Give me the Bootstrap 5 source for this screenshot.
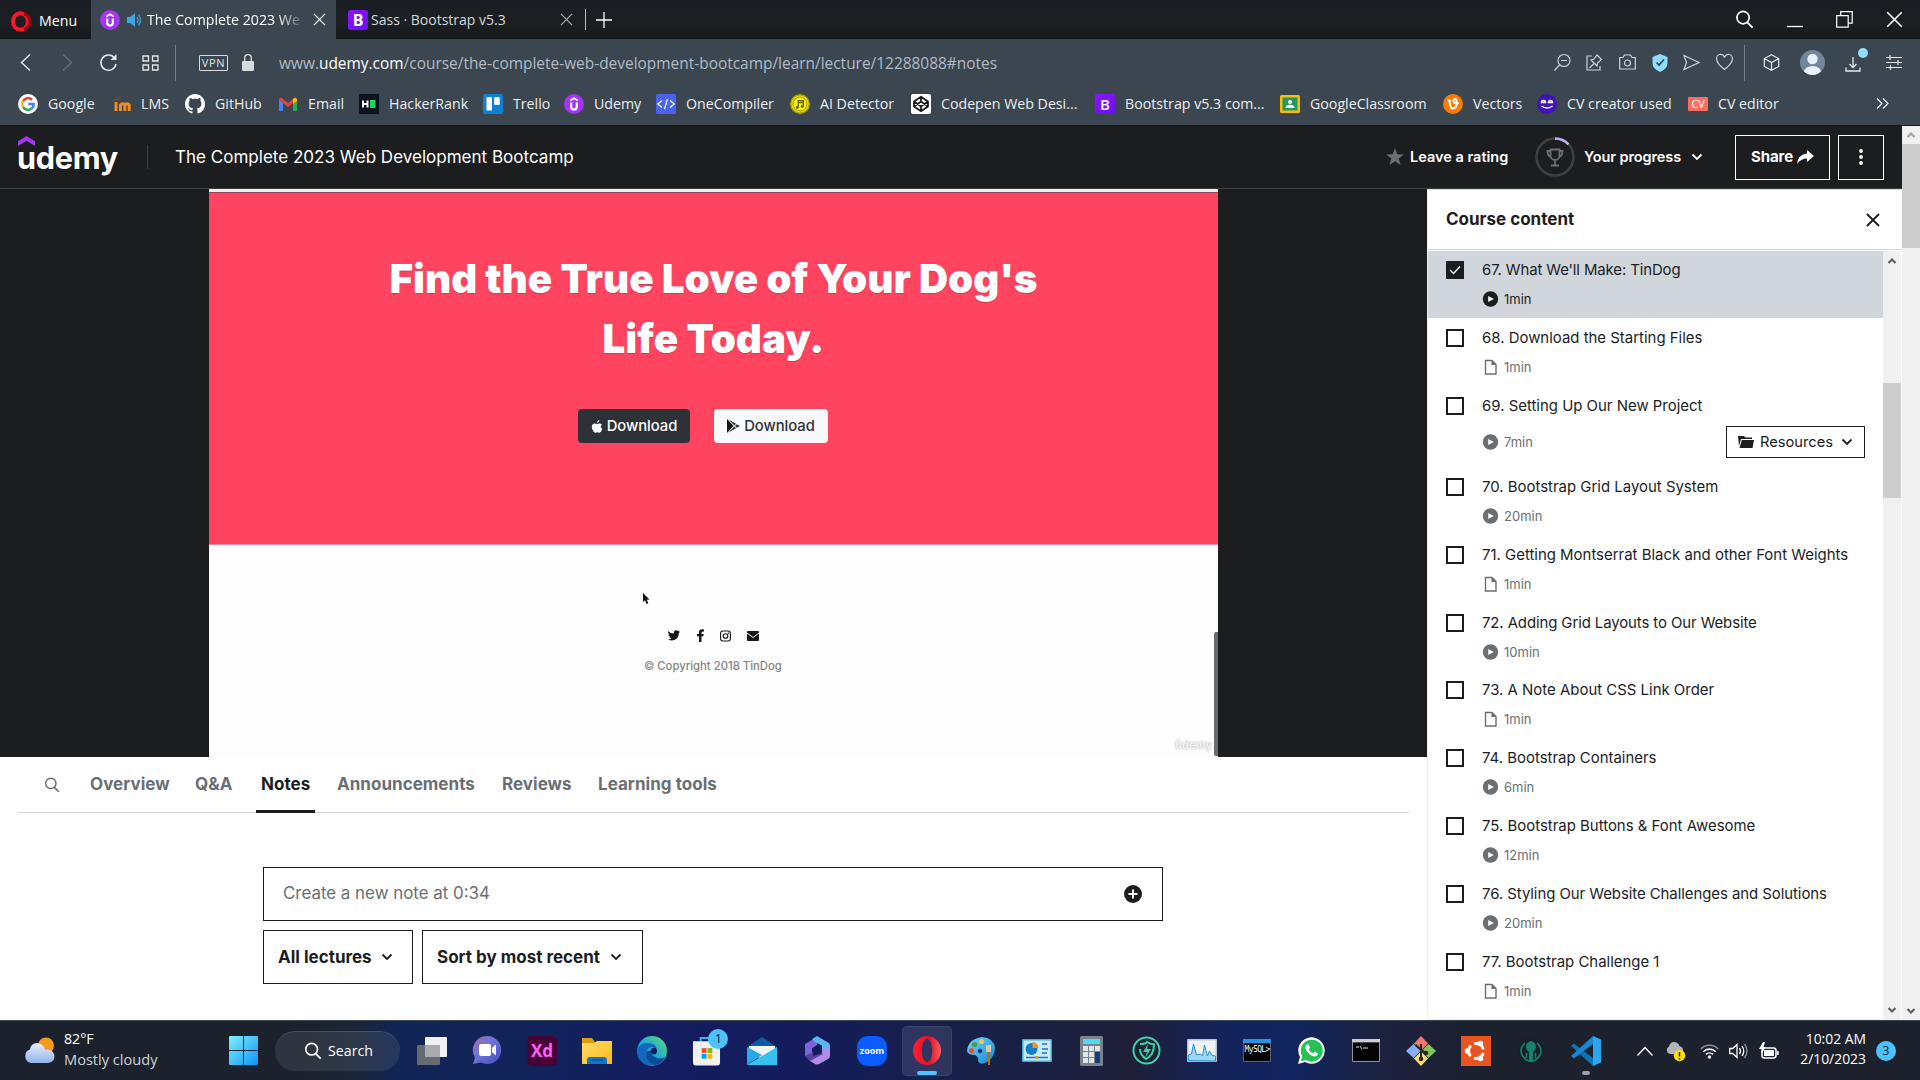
<!DOCTYPE html>
<html lang="en">
<head>
<meta charset="utf-8">
<meta name="viewport" content="width=device-width, initial-scale=1">
<title>The Complete 2023 Web Development Bootcamp</title>
<link href="https://cdn.jsdelivr.net/npm/bootstrap@5.3.0/dist/css/bootstrap.min.css" rel="stylesheet">
<style>
body{width:1920px;height:1080px;overflow:hidden;background:#fff;color:#1c1d1f;font-family:Inter,"Liberation Sans",sans-serif;white-space:nowrap}
svg{display:block;flex:none;overflow:visible}
.ln{fill:none;stroke:currentColor}
.ui{font-family:"Open Sans","Noto Sans",sans-serif;font-size:14.2px;line-height:20px}
/* browser chrome */
.tabstrip{height:39px;background:linear-gradient(#1a1e22,#1b1f22 60%,#15181c);color:#fff}
.menu-cell{width:91px;padding-left:10px;gap:8px}
.tab-on{width:245px;background:#3b4651;padding:0 10px 0 9px}
.tab-title{width:156px;margin-left:5px;-webkit-mask-image:linear-gradient(90deg,#000 84%,transparent 102%);mask-image:linear-gradient(90deg,#000 84%,transparent 102%)}
.tab-off{width:249px;padding:0 12px;color:#d5d7d9}
.toolbar-row{height:47px;background:#3b4651;color:#e4e7ea}
.vline{width:1px;height:36px;background:#73808c}
.vpn{width:29px;height:16px;border:1px solid #d8dcdf;border-radius:1px;font-size:11px;line-height:14px;letter-spacing:.6px;text-align:center;color:#dde0e3}
.addr{font-size:15.45px;color:#b2bac4}
.addr b{font-weight:400;color:#fff}
.marks{height:40px;background:#3b4651;border-bottom:1px solid #14181c;padding:0 31px 4px 18px;color:#eceef0}
.bm{gap:10px;margin-right:16px}
.w29{width:29px}.w35{width:35px}.w47{width:47px}.w48{width:48px}.w62{width:62px}.w75{width:75px}.w78{width:78px}.w88{width:88px}.w105{width:105px}.w117{width:117px}.w138{width:138px}
/* course header */
.course-bar{width:1902px;height:63px;background:#1c1d1f;border-bottom:1px solid #3e4143;color:#fff;padding:0 18px}
.brand{font-weight:700;font-size:30.6px;line-height:36px;letter-spacing:-.3px;width:102px;position:relative;top:1px;left:-1px}
.brand svg{position:absolute;left:1px;top:-5px}
.crs-title{font-size:17.05px}
.hd{font-weight:600;font-size:14.5px}
.box-btn{height:45px;border:1px solid #fff;font-weight:700;font-size:15px;letter-spacing:-.1px}
/* page */
.page{height:894px}
.view{width:1902px;height:894px}
.leftcol{width:1427px}
.stage{height:568px;background:#1c1d1f}
.video{width:1009px;margin-left:209px;height:568px;background:#fefefe;position:relative}
.video .edge{height:4px;background:#eef1f3;border-bottom:1px solid #94495a}
.pink{height:352px;background:#ff4460;border-bottom:1px solid #e8899a;color:#fff;padding-top:56px}
.pink h1{font-weight:900;font-size:40.3px;line-height:59.5px;margin:0;text-shadow:0 1px 1px rgba(120,60,80,.4)}
.dl{height:34px;border-radius:4px;font-size:14.8px;font-weight:500;letter-spacing:-.02px}
.dl-dark{width:112px;background:#2e3238;color:#fff}
.dl-light{width:114px;background:#f8f9fb;color:#2e3238}
.copy{font-size:11.3px;font-weight:500;color:#858585}
.cursor-mark{position:absolute;left:434px;top:404px}
.wm{position:absolute;right:6px;bottom:4px;font-size:11.2px;line-height:16px;font-weight:600;color:#f7f7f7;text-shadow:0 0 2px #999}
.vscroll{position:absolute;right:0;bottom:1px;width:4px;height:124px;background:#6b6b6e;border-radius:2px 0 0 2px}
.tabs-line{height:56px;margin:0 18px;border-bottom:1px solid #d1d7dc;color:#6a6f73;font-weight:700;font-size:17px;letter-spacing:.03px;padding-left:26px}
.tabs-line .tb{height:56px;line-height:54px}
.tabs-line .on{color:#1c1d1f;border-bottom:3px solid #1c1d1f;padding:0 5px;margin:0 -5px;width:59px}
.note-in{width:900px;height:54px;border:1px solid #1c1d1f;padding:0 20px 0 19px;font-size:16.9px;color:#6a6f73}
.pick{height:54px;border:1px solid #1c1d1f;font-weight:700;font-size:17px;padding:0 14px}
.side{width:475px;border-left:1px solid #eceef0;border-top:1px solid #d1d7dc;border-bottom:1px solid #eee;background:#fff;height:831px}
.side-head{height:60px;border-bottom:1px solid #d1d7dc;padding:1px 22px 0 18px;font-weight:700;font-size:17px}
.lec{height:67.88px;padding:10px 18px 0;width:455px;font-size:14.95px;line-height:19px}
.lec.sel{background:#d1d5dc;height:66.9px;margin-bottom:.98px}
.lec.tall{height:81.1px}
.lec .tm{font-size:13px;color:#6a6f73;gap:5px;line-height:18px}
.lec.sel .tm{color:#1c1d1f}
.lec .tx{margin-left:18px}
.lec .tx>.tm,.lec .rw{margin-top:10px}
.cb{width:18px;height:18px;border:2px solid #1c1d1f;flex:none}
.cb.full{background:#1c1d1f}
.res{width:139px;height:32px;border:1px solid #1c1d1f;font-size:14.7px;padding-top:1px}
.sbar{width:18px;background:#f0f0f0;color:#606060}
.sbar .thumb{background:#cdcdcd;width:18px}
.flip{transform:rotate(180deg);margin:auto 0 4px}
/* taskbar */
.taskbar{height:60px;border-top:1px solid #3d464e;color:#fff;background:linear-gradient(90deg,#1c222d 0,#1c222d 300px,#1b2536 350px,#112557 400px,#11245a 520px,#131e60 640px,#141c5c 800px,#18204a 960px,#1b2040 1060px,#1f2038 1130px,#14235a 1220px,#112560 1290px,#1c2240 1380px,#1c212e 1480px,#1c222d 100%)}
.pill{width:125px;height:40px;border-radius:20px;background:rgba(120,130,140,.2);border-top:1px solid rgba(255,255,255,.12)}
.slot{width:54.98px;height:59px;position:relative}
.slot.live::before{content:"";position:absolute;inset:5px 2.5px 4px;background:rgba(255,255,255,.1);border-radius:5px;border:1px solid rgba(255,255,255,.06)}
.slot>svg{position:relative}
.dash{position:absolute;bottom:5px;height:4px;border-radius:2px}
.cnt{position:absolute;width:20px;height:20px;border-radius:50%;background:#4cc2ff;color:#10202c;font-size:12px;line-height:20px;text-align:center}
.cnt.own{position:static}
</style>
</head>
<body class="d-flex flex-column">
<svg width="0" height="0" class="position-absolute">
<defs>
<linearGradient id="gWin" x1="0" y1="0" x2="1" y2="1"><stop offset="0" stop-color="#7df0ff"/><stop offset="1" stop-color="#0d95f2"/></linearGradient>
<linearGradient id="gBs" x1="0" y1="0" x2="1" y2="1"><stop offset="0" stop-color="#9013fe"/><stop offset="1" stop-color="#6610f2"/></linearGradient>
<linearGradient id="gCloud" x1="0" y1="0" x2="0" y2="1"><stop offset="0" stop-color="#e6edfb"/><stop offset="1" stop-color="#93b4ee"/></linearGradient>
<linearGradient id="gOp" x1="0" y1="0" x2="1" y2="0"><stop offset="0" stop-color="#ff1b2d"/><stop offset=".6" stop-color="#e0142a"/><stop offset="1" stop-color="#ff5a5f"/></linearGradient>
<linearGradient id="gEdge" x1="0" y1="1" x2="1" y2="0"><stop offset="0" stop-color="#1170c9"/><stop offset=".5" stop-color="#1fa9d8"/><stop offset="1" stop-color="#5fe06a"/></linearGradient>
<linearGradient id="gChat" x1="0" y1="0" x2="1" y2="1"><stop offset="0" stop-color="#a56a9e"/><stop offset=".4" stop-color="#6f74d8"/><stop offset="1" stop-color="#4a4bc0"/></linearGradient>
<linearGradient id="gPaint" x1="0" y1="0" x2="1" y2="1"><stop offset="0" stop-color="#6fd6fb"/><stop offset="1" stop-color="#1487d8"/></linearGradient>
<linearGradient id="gFold" x1="0" y1="0" x2="1" y2="1"><stop offset="0" stop-color="#ffdd71"/><stop offset="1" stop-color="#fbb812"/></linearGradient>
<symbol id="ud" viewBox="0 0 20 20"><circle cx="10" cy="10" r="10" fill="#a435f0"/><path d="M6.300 6.400 10 4.200l3.700 2.200" fill="none" stroke="#fff" stroke-width="1.700"/><path d="M7.200 8.600v4.200a2.800 2.800 0 0 0 5.600 0V8.600" fill="none" stroke="#fff" stroke-width="2.100"/></symbol>
<symbol id="chev" viewBox="0 0 12 12"><path d="M1.500 3.500 6 8l4.500-4.500" fill="none" stroke="currentColor" stroke-width="1.800"/></symbol>
<symbol id="play" viewBox="0 0 16 16"><circle cx="8" cy="8" r="7.700" fill="currentColor"/><path d="M5.700 5 11.300 8 5.700 11z" fill="#fff"/></symbol>
<symbol id="doc" viewBox="0 0 16 16"><path d="M3 1.500h6.500L13.500 5.500v9.500H3z" fill="none" stroke="currentColor" stroke-width="1.400"/><path d="M9 1v5h5z" fill="currentColor"/></symbol>
<symbol id="xx" viewBox="0 0 14 14"><path d="M1 1l12 12M13 1 1 13" fill="none" stroke="currentColor" stroke-width="1.300"/></symbol>
<symbol id="mag" viewBox="0 0 20 20"><circle cx="8.500" cy="8" r="6.500" fill="none" stroke="currentColor" stroke-width="1.800"/><path d="M13 13l5.500 5.500" stroke="currentColor" stroke-width="2"/></symbol>
<symbol id="up" viewBox="0 0 10 10"><path d="M1.500 7 5 3.500 8.500 7" fill="none" stroke="currentColor" stroke-width="2.200"/></symbol>
</defs>
</svg>

<header class="ui">
<div class="tabstrip d-flex">
  <div class="menu-cell d-flex align-items-center pt-1">
    <svg width="21" height="21" viewBox="0 0 21 21"><ellipse cx="10.500" cy="10.500" rx="7.500" ry="8.300" fill="none" stroke="#f8172c" stroke-width="4"/><path d="M14 2.500a8.500 8.500 0 0 1 0 16" fill="none" stroke="#a70014" stroke-width="3"/></svg><span style="margin-top:-2px">Menu</span>
  </div>
  <div class="tab-on d-flex align-items-center">
    <svg width="20" height="20"><use href="#ud"/></svg>
    <svg style="margin-left:7px" width="15" height="14" viewBox="0 0 15 14"><path d="M0 4h3l5-4v14l-5-4H0z" fill="#3fa4e0"/><path d="M10 4q2 3 0 6M11.500 1.500q4 5.500 0 11" fill="none" stroke="#3fa4e0" stroke-width="1.200"/></svg>
    <span class="tab-title">The Complete 2023 We</span>
    <svg class="ms-auto" width="13" height="13"><use href="#xx"/></svg>
  </div>
  <div class="tab-off d-flex align-items-center">
    <svg width="20" height="20" viewBox="0 0 20 20"><rect width="20" height="20" rx="3" fill="url(#gBs)"/><text x="10" y="15.500" font-size="16" font-weight="700" fill="#fff" text-anchor="middle">B</text></svg>
    <span style="margin-left:3px;font-size:14px">Sass · Bootstrap v5.3</span>
    <svg class="ms-auto opacity-75" width="13" height="13"><use href="#xx"/></svg>
  </div>
  <div class="d-flex align-items-center gap-2"><div class="vline" style="height:21px;background:#b9bdc0"></div><svg style="margin-left:2px" width="16" height="16" viewBox="0 0 16 16"><path d="M8 0v16M0 8h16" class="ln" stroke-width="1.300"/></svg></div>
  <div class="d-flex align-items-center ms-auto" style="gap:33px;padding-right:17px">
    <svg width="19" height="19"><use href="#mag"/></svg>
    <svg width="16" height="17" viewBox="0 0 16 17"><path d="M0 15.500h16" class="ln" stroke-width="1.300"/></svg>
    <svg width="17" height="17" viewBox="0 0 17 17"><path d="M.700 4.700h11.500v11.500H.700zM4.700 4.700V.700h11.500v11.500h-4" class="ln" stroke-width="1.200"/></svg>
    <svg width="17" height="17"><use href="#xx"/></svg>
  </div>
</div>
<div class="toolbar-row d-flex align-items-center">
  <svg style="margin-left:20px" width="11" height="17" viewBox="0 0 11 17"><path d="M10 .500 1.500 8.500 10 16.500" class="ln" stroke-width="1.400"/></svg>
  <svg class="opacity-25" style="margin-left:31px" width="11" height="17" viewBox="0 0 11 17"><path d="M1 .500 9.500 8.500 1 16.500" class="ln" stroke-width="1.400"/></svg>
  <svg style="margin-left:27px" width="17" height="17" viewBox="0 0 17 17"><path d="M14.500 4A7.600 7.600 0 1 0 16 10" class="ln" stroke-width="1.500"/><path d="M16.500 0v6h-6z" fill="currentColor"/></svg>
  <svg style="margin-left:25px" width="17" height="16" viewBox="0 0 17 16"><path d="M1 1h5.500v5H1zM10.500 1H16v5h-5.500zM1 10h5.500v5H1zM10.500 10H16v5h-5.500z" class="ln" stroke-width="1.300"/></svg>
  <div class="vline" style="margin-left:16px"></div>
  <div class="vpn" style="margin-left:23px">VPN</div>
  <svg style="margin-left:14px" width="12" height="17" viewBox="0 0 12 17"><rect y="7" width="12" height="10" rx="1" fill="#d8dbde"/><path d="M2.700 7V4a3.300 3.300 0 0 1 6.600 0v3" class="ln" stroke-width="1.300"/></svg>
  <span class="addr" style="margin-left:25px">www.<b>udemy.com</b>/course/the-complete-web-development-bootcamp/learn/lecture/12288088#notes</span>
  <div class="d-flex align-items-center ms-auto" style="gap:15.700px;color:#cdd3d8">
    <svg width="17" height="17" viewBox="0 0 17 17"><circle cx="10" cy="6.500" r="6" class="ln" stroke-width="1.200"/><path d="M7 6.500h6M5.500 11 .500 16.500" class="ln" stroke-width="1.200"/></svg>
    <svg width="17" height="17" viewBox="0 0 17 17"><path d="M6 2H1v14h13v-4M3.500 14 8 9.500M5 6l6 6 .500-3 4-3.500L11 1 8 5z" class="ln" stroke-width="1.200"/></svg>
    <svg width="17" height="17" viewBox="0 0 17 17"><path d="M.700 3.500H4L5.500 1h6L13 3.500h3.300V15H.700z" class="ln" stroke-width="1.200"/><circle cx="8.500" cy="9" r="3" class="ln" stroke-width="1.200"/></svg>
    <svg width="16" height="18" viewBox="0 0 16 18"><path d="M8 0l7.500 3v6q0 6-7.500 9Q.500 15 .500 9V3z" fill="#8fdcff"/><path d="M4.500 8.500 7 11l5-5.500" fill="none" stroke="#2b4353" stroke-width="1.600"/></svg>
    <svg width="17" height="17" viewBox="0 0 17 17"><path d="M1 1.500 16 8.500 1 15.500l2.500-7z" class="ln" stroke-width="1.200"/></svg>
    <svg width="17" height="17" viewBox="0 0 17 17"><path d="M8.500 15.500Q.700 9.500.700 5.300A4 4 0 0 1 8.500 3.500a4 4 0 0 1 7.800 1.800Q16.300 9.500 8.500 15.500z" class="ln" stroke-width="1.200"/></svg>
  </div>
  <div class="vline" style="margin-left:11px"></div>
  <svg style="margin-left:18px" width="17" height="17" viewBox="0 0 17 17"><path d="M8.500.700 15.700 4.500v8L8.500 16.300 1.300 12.500v-8zM1.300 4.500 8.500 8.500l7.200-4M8.500 8.500v7.800" class="ln" stroke-width="1.200"/></svg>
  <svg style="margin-left:20px" width="25" height="25" viewBox="0 0 25 25"><defs><clipPath id="av"><circle cx="12.500" cy="12.500" r="12.500"/></clipPath></defs><g clip-path="url(#av)"><rect width="25" height="25" fill="#72869c"/><circle cx="12.500" cy="9" r="5.200" fill="#e9f2fb"/><ellipse cx="12.500" cy="22" rx="8.500" ry="6" fill="#e9f2fb"/></g></svg>
  <svg style="margin:3px 0 0 20px" width="16" height="16" viewBox="0 0 16 16"><path d="M8 1v10M4.500 8 8 11.500 11.500 8M1 11.500V15h14v-3.500" class="ln" stroke-width="1.300"/><circle cx="18" cy="-3" r="5" fill="#8fdcff"/></svg>
  <svg style="margin:0 18px 0 25px" width="16" height="15" viewBox="0 0 16 15"><path d="M0 2.500h16M0 7.500h16M0 12.500h16M4 0v5M12 5v5M4.500 10v5" class="ln" stroke-width="1.200"/></svg>
</div>
<div class="marks d-flex align-items-center">
  <div class="bm d-flex align-items-center"><svg width="20" height="20" viewBox="0 0 20 20"><circle cx="10" cy="10" r="10" fill="#fff"/><g fill="none" stroke-width="2.600"><path d="M14 5.800A5.700 5.700 0 0 0 5 7.200" stroke="#ea4335"/><path d="M5 7.200a5.700 5.700 0 0 0 0 5.600" stroke="#fbbc05"/><path d="M5 12.800a5.700 5.700 0 0 0 8.700 1.600" stroke="#34a853"/><path d="M13.700 14.400A5.700 5.700 0 0 0 15.700 10H10.200" stroke="#4285f4"/></g></svg><span class="w48">Google</span></div>
  <div class="bm d-flex align-items-center" style="margin-left:-1px"><svg width="20" height="20" viewBox="0 0 20 20"><g fill="none" stroke="#f08a24" stroke-width="3"><path d="M5 17V8"/><path d="M9.500 17v-6a2.500 2.500 0 0 1 4.400 0v6M13.900 17v-6a2.500 2.500 0 0 1 4.300 0v6"/></g><path d="M0 6l7-3 4 1-5 3z" fill="#5b4a42"/></svg><span class="w29">LMS</span></div>
  <div class="bm d-flex align-items-center" style="margin-left:-1px"><svg width="20" height="20" viewBox="0 0 16 16"><path fill="#fff" d="M8 0C3.580 0 0 3.580 0 8c0 3.540 2.290 6.530 5.470 7.590.4.070.55-.17.55-.38 0-.19-.01-.82-.01-1.490-2.010.37-2.530-.49-2.690-.94-.09-.23-.48-.94-.82-1.130-.28-.15-.68-.52-.01-.53.63-.01 1.080.58 1.230.82.72 1.210 1.870.87 2.330.66.07-.52.28-.87.51-1.070-1.780-.2-3.640-.89-3.640-3.950 0-.87.31-1.590.82-2.150-.08-.2-.36-1.020.08-2.120 0 0 .67-.21 2.200.82.64-.18 1.320-.27 2-.27s1.360.09 2 .27c1.530-1.040 2.200-.82 2.200-.82.44 1.100.16 1.920.08 2.120.51.56.82 1.270.82 2.150 0 3.070-1.870 3.750-3.650 3.950.29.25.54.73.54 1.480 0 1.070-.01 1.930-.01 2.200 0 .21.15.46.55.38A8 8 0 0 0 16 8c0-4.420-3.580-8-8-8"/></svg><span class="w47">GitHub</span></div>
  <div class="bm d-flex align-items-center"><svg width="20" height="20" viewBox="0 0 20 20"><path d="M1 5v12h4V9" fill="#4285f4"/><path d="M19 5v12h-4V9" fill="#34a853"/><path d="M1 5l2-1.500 7 5.500 7-5.500L19 5l-4 4-5 4-5-4z" fill="#ea4335"/><path d="M15 5l2-1.500L19 5v2l-4 3z" fill="#fbbc04"/></svg><span class="w35">Email</span></div>
  <div class="bm d-flex align-items-center"><svg width="20" height="20" viewBox="0 0 20 20"><rect width="20" height="20" rx="1" fill="#0b141e"/><path d="M4 6.500v7M8.500 6.500v7M4 10h4.500" stroke="#fff" stroke-width="2"/><rect x="11" y="6" width="5.500" height="8" fill="#1bd65f"/></svg><span class="w78">HackerRank</span></div>
  <div class="bm d-flex align-items-center"><svg width="20" height="20" viewBox="0 0 20 20"><rect width="20" height="20" rx="2.500" fill="#0a84d0"/><rect x="3.500" y="3" width="5.500" height="13.500" rx="1" fill="#fff"/><rect x="11.200" y="3" width="5.500" height="8" rx="1" fill="#fff"/></svg><span class="w35">Trello</span></div>
  <div class="bm d-flex align-items-center"><svg width="20" height="20"><use href="#ud"/></svg><span class="w47">Udemy</span></div>
  <div class="bm d-flex align-items-center" style="margin-left:-1px"><svg width="20" height="20" viewBox="0 0 20 20"><rect width="20" height="20" rx="1.500" fill="#4b62ee"/><path d="M6 6.500 1.800 10 6 13.500M14 6.500 18.200 10 14 13.500M11.500 5l-3 10" fill="none" stroke="#fff" stroke-width="1.200"/></svg><span class="w88">OneCompiler</span></div>
  <div class="bm d-flex align-items-center"><svg width="20" height="20" viewBox="0 0 20 20"><circle cx="10" cy="10" r="9.300" fill="#f2e500" stroke="#a89c00" stroke-width="1.400"/><circle cx="10" cy="10" r="7" fill="#f8ee0a" stroke="#8d8300" stroke-width=".8"/><path d="M8.300 13.200V6.600h5v5.600M8.300 8.500h5" fill="none" stroke="#6e6600" stroke-width="1.300"/><circle cx="7.300" cy="13.300" r="1.500" fill="#6e6600"/><circle cx="12.300" cy="12.300" r="1.500" fill="#6e6600"/></svg><span class="w75">AI Detector</span></div>
  <div class="bm d-flex align-items-center"><svg width="20" height="20" viewBox="0 0 20 20"><rect width="20" height="20" rx="2" fill="#fff"/><path d="M10 2.800 17 7.500v5l-7 4.700-7-4.700v-5zM10 2.800v4.700M10 12.500v4.700M3 7.500l7 5 7-5M3 12.500l7-5 7 5" fill="none" stroke="#15171a" stroke-width="1.700"/></svg><span class="w138">Codepen Web Desi...</span></div>
  <div class="bm d-flex align-items-center"><svg width="20" height="20" viewBox="0 0 20 20"><rect width="20" height="20" rx="2" fill="url(#gBs)"/><text x="10" y="15.500" font-size="15" font-weight="600" fill="#fff" text-anchor="middle">B</text></svg><span class="w138">Bootstrap v5.3 com...</span></div>
  <div class="bm d-flex align-items-center" style="margin-left:1px"><svg width="20" height="20" viewBox="0 0 20 20"><rect y="1" width="20" height="18" rx="1.500" fill="#f9bc0a"/><rect x="2.500" y="3.500" width="15" height="13" fill="#279660"/><circle cx="10" cy="8" r="2" fill="#fff"/><path d="M5.500 14q0-3.300 4.500-3.300t4.500 3.300z" fill="#e8f5ec"/></svg><span class="w117">GoogleClassroom</span></div>
  <div class="bm d-flex align-items-center"><svg width="20" height="20" viewBox="0 0 20 20"><circle cx="10" cy="10" r="10" fill="#ff7a00"/><path d="M4.500 6.500h2.200q0 8 3 8 4 0 4-6 0-3.500-1.700-3.500t-1.500 2.300q.200 2.500 5.300 1.700" fill="none" stroke="#fff" stroke-width="2"/></svg><span class="w48">Vectors</span></div>
  <div class="bm d-flex align-items-center"><svg width="20" height="20" viewBox="0 0 20 20"><circle cx="10" cy="10" r="10" fill="#4313b8"/><path d="M4.500 8.500a2 2 0 0 1 4 0zM11.500 8.500a2 2 0 0 1 4 0zM4.500 12q5.500 4 11 0" fill="none" stroke="#fff" stroke-width="1.500"/></svg><span class="w105">CV creator used</span></div>
  <div class="bm d-flex align-items-center"><svg width="20" height="20" viewBox="0 0 20 20"><rect y="3" width="20" height="14" rx="1" fill="#fb6f60"/><text x="10" y="14" font-size="10.500" fill="#fff" text-anchor="middle">CV</text></svg><span class="w62">CV editor</span></div>
  <svg class="ms-auto" width="13" height="11" viewBox="0 0 13 11"><path d="M1 .500 6 5.500 1 10.500M7 .500l5 5-5 5" class="ln" stroke-width="1.200"/></svg>
</div>
</header>

<div class="page d-flex">
<div class="view">
  <div class="course-bar d-flex align-items-center">
    <div class="brand">udemy<svg width="17" height="11" viewBox="0 0 17 11"><path d="M0 11V6.200L8.500 1 17 6.200V11L8.500 5.800z" fill="#a435f0"/></svg></div>
    <div style="width:1px;height:24px;background:#3e4143;margin:0 27px"></div>
    <span class="crs-title">The Complete 2023 Web Development Bootcamp</span>
    <div class="d-flex align-items-center ms-auto">
      <svg width="18" height="18" viewBox="0 0 18 18"><path d="M9 0l2.300 6.300 6.700.200-5.300 4.100L14.600 17 9 13.200 3.400 17l1.900-6.400L0 6.500l6.700-.200z" fill="#6a6f73"/></svg>
      <span class="hd" style="margin-left:6px;width:99px">Leave a rating</span>
      <svg style="margin-left:26px" width="40" height="40" viewBox="0 0 40 40"><circle cx="20" cy="20" r="18.500" fill="none" stroke="#3e4143" stroke-width="2.500"/><path d="M20 1.500a18.500 18.500 0 0 1 13.500 5.900" fill="none" stroke="#c0adf5" stroke-width="2.500"/><g fill="none" stroke="#6a6f73" stroke-width="1.800"><path d="M15.500 12.500h9v6a4.500 4.500 0 0 1-9 0zM15.500 14h-3q0 5.500 4 6M24.500 14h3q0 5.500-4 6M20 23v5M16 28.500h8"/></g></svg>
      <span class="hd" style="margin-left:9px;width:98px;letter-spacing:-.1px">Your progress</span>
      <svg style="margin-left:9px" width="12" height="12"><use href="#chev"/></svg>
      <div class="box-btn d-flex align-items-center justify-content-center" style="width:95px;margin-left:32px;gap:4px">Share<svg width="17" height="14" viewBox="0 0 17 14"><path d="M10 0l7 6-7 6V8.500Q4 8.500 0 14 1 4.500 10 3.500z" fill="#fff"/></svg></div>
      <div class="box-btn d-flex align-items-center justify-content-center" style="width:46px;margin-left:8px"><svg width="4" height="16" viewBox="0 0 4 16"><g fill="#fff"><circle cx="2" cy="2" r="1.900"/><circle cx="2" cy="8" r="1.900"/><circle cx="2" cy="14" r="1.900"/></g></svg></div>
    </div>
  </div>
  <div class="d-flex">
    <main class="leftcol">
      <div class="stage">
        <div class="video">
          <div class="edge"></div>
          <div class="pink text-center">
            <h1>Find the True Love of Your Dog's<br>Life Today.</h1>
            <div class="d-flex" style="margin:41px 0 0 369px;gap:24px">
              <div class="dl dl-dark d-flex align-items-center justify-content-center" style="gap:4px"><svg width="12" height="13" viewBox="0 0 12 14"><path d="M8.700 0Q8.700 2.600 6 3.200 6 .700 8.700 0zM6.200 4.300Q9.500 2.800 11.300 5 8.500 7 11.600 9.500 10.200 14 8.200 13.600q-2-.800-3.800 0Q2.500 14 .800 9.800-.500 5 2.800 3.800 4.300 3.500 6.200 4.300z" fill="#fff"/></svg>Download</div>
              <div class="dl dl-light d-flex align-items-center justify-content-center" style="gap:4px"><svg width="13" height="14" viewBox="0 0 13 14"><path d="M0 0v14L6.500 7z" fill="#15171a"/><path d="M1.500.500 9 4.700 7.300 6.400zM1.500 13.500 9 9.300 7.300 7.600zM9.800 5.200 13 7 9.800 8.800 8 7z" fill="#33373d"/></svg>Download</div>
            </div>
          </div>
          <div class="d-flex align-items-center" style="margin:84px 0 0 459px;color:#16181b">
            <svg width="12" height="11" viewBox="0 0 12 11"><path d="M0 1Q2.500 3.500 5.800 3.500 5.500.500 8.200.300 9.500.300 10.200 1.200L11.700.700 11 2l1-.300-1.100 1.300Q10.800 10 4 10.500 1.500 10.500 0 9.400q2 0 3.400-1Q1.700 8 1.200 6.700h1Q.500 6 .400 4.200l1 .300Q-.300 3 0 1z" fill="currentColor"/></svg>
            <svg style="margin-left:17px" width="7" height="13" viewBox="0 0 7 13"><path d="M2 13V7.300H0V5h2V3.500Q2 .300 5 .200l2 .200v2H5.800Q4.500 2.500 4.500 3.700V5h2.200l-.400 2.300H4.500V13z" fill="currentColor"/></svg>
            <svg style="margin-left:16px" width="11" height="12" viewBox="0 0 11 12"><rect x=".600" y="1" width="9.800" height="10" rx="2.500" class="ln" stroke-width="1.100"/><circle cx="5.500" cy="6" r="2.300" class="ln" stroke-width="1.100"/><circle cx="8.300" cy="3.200" r=".7" fill="currentColor"/></svg>
            <svg style="margin-left:16px" width="12" height="10" viewBox="0 0 12 10"><rect width="12" height="10" rx="1" fill="currentColor"/><path d="M0 2l6 4.500L12 2" fill="none" stroke="#fff"/></svg>
          </div>
          <div class="copy" style="margin:16px 0 0 435px">© Copyright 2018 TinDog</div>
          <svg class="cursor-mark" width="7" height="12" viewBox="0 0 7 12"><path d="M0 0v9l2-1.700L3.500 11l1.800-.800L3.800 6.800 6.500 6.500z" fill="#111"/></svg>
          <div class="wm">ûdemy</div>
          <div class="vscroll"></div>
        </div>
      </div>
      <div class="tabs-line d-flex align-items-center">
        <svg width="16" height="16"><use href="#mag"/></svg>
        <div class="tb" style="margin-left:30px;width:105px">Overview</div>
        <div class="tb" style="width:66px">Q&amp;A</div>
        <div class="tb on">Notes</div>
        <div class="tb" style="margin-left:27px;width:165px">Announcements</div>
        <div class="tb" style="width:96px">Reviews</div>
        <div class="tb">Learning tools</div>
      </div>
      <div style="padding:54px 0 0 263px">
        <div class="note-in d-flex align-items-center justify-content-between"><span>Create a new note at 0:34</span><svg width="18" height="18" viewBox="0 0 18 18"><circle cx="9" cy="9" r="9" fill="#1c1d1f"/><path d="M9 4.500v9M4.500 9h9" stroke="#fff" stroke-width="2"/></svg></div>
        <div class="d-flex" style="gap:9px;margin-top:9px">
          <div class="pick d-flex align-items-center" style="width:150px;gap:9px"><span style="margin-top:1px">All lectures</span><svg width="12" height="12"><use href="#chev"/></svg></div>
          <div class="pick d-flex align-items-center" style="width:221px;gap:10px"><span style="margin-top:1px">Sort by most recent</span><svg width="12" height="12"><use href="#chev"/></svg></div>
        </div>
      </div>
    </main>
    <aside class="side">
      <div class="side-head d-flex align-items-center justify-content-between">Course content<svg width="14" height="14" viewBox="0 0 14 14"><path d="M1 1l12 12M13 1 1 13" class="ln" stroke-width="1.900"/></svg></div>
      <div class="d-flex" style="padding-top:1px">
        <div style="width:455px">
          <div class="lec sel d-flex"><div class="cb full d-flex align-items-center justify-content-center"><svg width="12" height="10" viewBox="0 0 12 10"><path d="M1 5l3.500 3.500L11 1.500" fill="none" stroke="#fff" stroke-width="1.300"/></svg></div><div class="tx"><div style="letter-spacing:-.12px">67. What We'll Make: TinDog</div><div class="tm d-flex align-items-center"><svg width="17" height="16"><use href="#play"/></svg>1min</div></div></div>
          <div class="lec d-flex"><div class="cb"></div><div class="tx"><div>68. Download the Starting Files</div><div class="tm d-flex align-items-center"><svg width="17" height="16"><use href="#doc"/></svg>1min</div></div></div>
          <div class="lec tall d-flex"><div class="cb"></div><div class="tx flex-grow-1"><div>69. Setting Up Our New Project</div><div class="rw d-flex justify-content-between align-items-center"><div class="tm d-flex align-items-center"><svg width="17" height="16"><use href="#play"/></svg>7min</div><div class="res d-flex align-items-center justify-content-center"><svg width="16" height="12" viewBox="0 0 16 12"><path d="M0 0h6l1.500 1.500H14V3H3L1 10z" fill="#1c1d1f"/><path d="M3.800 4H16l-1.500 8H1.500z" fill="#1c1d1f"/></svg><span style="margin:0 8px 0 6px">Resources</span><svg width="12" height="12"><use href="#chev"/></svg></div></div></div></div>
          <div class="lec d-flex"><div class="cb"></div><div class="tx"><div>70. Bootstrap Grid Layout System</div><div class="tm d-flex align-items-center"><svg width="17" height="16"><use href="#play"/></svg>20min</div></div></div>
          <div class="lec d-flex"><div class="cb"></div><div class="tx"><div>71. Getting Montserrat Black and other Font Weights</div><div class="tm d-flex align-items-center"><svg width="17" height="16"><use href="#doc"/></svg>1min</div></div></div>
          <div class="lec d-flex"><div class="cb"></div><div class="tx"><div style="letter-spacing:-.1px">72. Adding Grid Layouts to Our Website</div><div class="tm d-flex align-items-center"><svg width="17" height="16"><use href="#play"/></svg>10min</div></div></div>
          <div class="lec d-flex"><div class="cb"></div><div class="tx"><div>73. A Note About CSS Link Order</div><div class="tm d-flex align-items-center"><svg width="17" height="16"><use href="#doc"/></svg>1min</div></div></div>
          <div class="lec d-flex"><div class="cb"></div><div class="tx"><div>74. Bootstrap Containers</div><div class="tm d-flex align-items-center"><svg width="17" height="16"><use href="#play"/></svg>6min</div></div></div>
          <div class="lec d-flex"><div class="cb"></div><div class="tx"><div>75. Bootstrap Buttons &amp; Font Awesome</div><div class="tm d-flex align-items-center"><svg width="17" height="16"><use href="#play"/></svg>12min</div></div></div>
          <div class="lec d-flex"><div class="cb"></div><div class="tx"><div style="letter-spacing:-.06px">76. Styling Our Website Challenges and Solutions</div><div class="tm d-flex align-items-center"><svg width="17" height="16"><use href="#play"/></svg>20min</div></div></div>
          <div class="lec d-flex"><div class="cb"></div><div class="tx"><div>77. Bootstrap Challenge 1</div><div class="tm d-flex align-items-center"><svg width="17" height="16"><use href="#doc"/></svg>1min</div></div></div>
        </div>
        <div class="sbar d-flex flex-column align-items-center" style="height:768px"><svg style="margin-top:5px" width="10" height="10"><use href="#up"/></svg><div class="thumb" style="margin-top:117px;height:115px"></div><svg class="flip" width="10" height="10"><use href="#up"/></svg></div>
      </div>
    </aside>
  </div>
</div>
<div class="sbar d-flex flex-column align-items-center"><svg style="margin-top:4px;color:#a3a3a3" width="10" height="10"><use href="#up"/></svg><div class="thumb" style="margin-top:4px;height:104px"></div><svg class="flip" width="10" height="10"><use href="#up"/></svg></div>
</div>

<footer class="taskbar ui d-flex align-items-center">
  <svg style="margin-left:24px" width="32" height="27" viewBox="0 0 32 27"><circle cx="22" cy="8.500" r="8" fill="#f59a1b"/><path d="M7 26a7 7 0 0 1-1-13.500Q7 6 13 6t8 6.500q8-1 9.500 6 0 7-6.500 7.500z" fill="url(#gCloud)"/></svg>
  <div style="margin:-3px 0 0 8px;width:165px"><div>82°F</div><div style="font-size:14.6px;color:#cfd2d6">Mostly cloudy</div></div>
  <svg width="29" height="29" viewBox="0 0 29 29"><path d="M0 1q0-1 1-1h13v14H0zM15 0h13q1 0 1 1v13H15zM0 15h14v14H1q-1 0-1-1zM15 15h14v13q0 1-1 1H15z" fill="url(#gWin)"/></svg>
  <div class="pill d-flex align-items-center" style="margin-left:17px;padding-left:29px"><svg width="18" height="18"><use href="#mag"/></svg><span style="margin-left:6px">Search</span></div>
  <div class="d-flex" style="margin-left:4.500px">
    <div class="slot d-flex align-items-center justify-content-center"><svg width="30" height="28" viewBox="0 0 30 28"><rect y="8" width="23" height="20" rx="1" fill="#666b70"/><rect x="8" width="22" height="20" rx="1" fill="#f2f2f3"/><rect x="8" y="8" width="15" height="12" fill="#a9abae"/></svg></div>
    <div class="slot d-flex align-items-center justify-content-center"><svg width="28" height="29" viewBox="0 0 28 29"><path d="M14 0a14 14 0 1 1-6 26.500L0 28l2-6.500A14 14 0 0 1 14 0z" fill="url(#gChat)"/><rect x="6" y="8" width="12" height="12" rx="2" fill="#fff"/><path d="M19 12l4-3.500v11L19 16z" fill="#fff"/></svg></div>
    <div class="slot d-flex align-items-center justify-content-center"><svg width="30" height="30" viewBox="0 0 30 30"><rect width="30" height="30" rx="5" fill="#470137"/><text x="15" y="21" font-size="17" font-weight="700" fill="#ff61f6" text-anchor="middle">Xd</text></svg></div>
    <div class="slot d-flex align-items-center justify-content-center"><svg width="30" height="26" viewBox="0 0 30 26"><path d="M0 0h10l3 4v6H0z" fill="#e09b08"/><path d="M0 5h12l3-2h15v23H0z" fill="url(#gFold)"/><path d="M5 26v-4q0-3 3-3h14q3 0 3 3v4z" fill="#0f78c9"/><path d="M9 22h12" stroke="#0b4f8c" stroke-width="1.200"/></svg></div>
    <div class="slot d-flex align-items-center justify-content-center"><svg width="30" height="30" viewBox="0 0 30 30"><circle cx="15" cy="15" r="15" fill="url(#gEdge)"/><path d="M0 14Q3 7 10 7q9 0 10 6-3-3-7-1.500Q9 13 9 18q1 8 9 10-4 2-8 1Q0 25 0 14z" fill="#1268bd"/><path d="M9 18q0 8 9 11 7-1 10-8-5 3-10 0-4-2-4.500-6Q9 14 9 18z" fill="#0c4c96"/><path d="M13.500 15q0-3 3.500-3.500 3.500.500 3 4.500-1 2-2 2.500-4 0-4.500-3.500z" fill="#131e60"/></svg></div>
    <div class="slot d-flex align-items-center justify-content-center"><svg width="29" height="30" viewBox="0 0 30 30"><path d="M9 6V1.500h9V6" fill="none" stroke="#30b5ee" stroke-width="2"/><path d="M1 5h28v22q0 3-3 3H4q-3 0-3-3z" fill="#f1f1f1"/><path d="M10 12h5v5h-5z" fill="#f25022"/><path d="M16 12h5v5h-5z" fill="#7fba00"/><path d="M10 18h5v5h-5z" fill="#00a4ef"/><path d="M16 18h5v5h-5z" fill="#ffb900"/></svg><span class="cnt" style="right:6px;top:8px">1</span></div>
    <div class="slot d-flex align-items-center justify-content-center"><svg width="30" height="28" viewBox="0 0 30 28"><path d="M0 10 15 0l15 10v6H0z" fill="#0c59a4"/><path d="M2 9h26v7L15 22 2 16z" fill="#f4f4f4"/><path d="M0 10l15 8-15 10z" fill="#28a8ea"/><path d="M30 10 0 28h30z" fill="#35c1f1"/></svg></div>
    <div class="slot d-flex align-items-center justify-content-center"><svg width="26" height="29" viewBox="0 0 26 29"><path d="M1 8 13 1v8l-5 3.500V21l-3 1.500-4-2.500z" fill="#7b63d8"/><path d="M13 0l11 6.500q2 1 2 3V16l-8-2V9.500L11 6 8 3z" fill="#54b8ee"/><path d="M26 12v8q0 2-2 3l-9 5q-2 1-4 0l-6-3.500 13-7V13z" fill="#b48be8"/><path d="M1 20l8-4v4l9-3 1 1-13 7z" fill="#57439f"/></svg></div>
    <div class="slot d-flex align-items-center justify-content-center"><svg width="30" height="30" viewBox="0 0 30 30"><rect width="30" height="30" rx="11" fill="#0b5cff"/><text x="15" y="17.500" font-size="9" font-weight="700" fill="#fff" text-anchor="middle">zoom</text></svg></div>
    <div class="slot live d-flex align-items-center justify-content-center"><svg width="28" height="29" viewBox="0 0 28 29"><path fill-rule="evenodd" d="M14 0a14 14.500 0 1 1 0 29a14 14.500 0 0 1 0-29zM14 2.500c-7 3-7 21 0 24c7-3 7-21 0-24z" fill="url(#gOp)"/></svg><span class="dash" style="width:20px;background:#4cc2ff"></span></div>
    <div class="slot d-flex align-items-center justify-content-center"><svg width="29" height="29" viewBox="0 0 29 29"><path d="M15 1Q27 2 28 12q0 9-8 14-7 4-9-1 1-4-3-6-7 0-8-4Q1 3 15 1z" fill="url(#gPaint)"/><circle cx="14.500" cy="5.500" r="2.600" fill="#ffc928"/><circle cx="7.500" cy="8.500" r="2.600" fill="#4f9d3a"/><circle cx="4.500" cy="14.500" r="2.500" fill="#e8502a"/><circle cx="13" cy="15" r="2.200" fill="#14306a"/><path d="M19 9h5v7h-5z" fill="#e6c79a"/><path d="M20.500 16h2.500v13h-2z" fill="#b96e14"/></svg></div>
    <div class="slot d-flex align-items-center justify-content-center"><svg width="30" height="23" viewBox="0 0 30 23"><rect width="30" height="23" rx="1" fill="#3eaee5"/><rect x="1.500" y="1.500" width="27" height="20" fill="#c6ebfa"/><circle cx="9.500" cy="10" r="6" fill="#147fd1"/><path d="M10.500 9V3a6 6 0 0 1 6 6z" fill="#f09122"/><path d="M20 5h5M20 10h6M20 14h5M4 18.500h22" stroke="#1b77b8" stroke-width="1.500"/><path d="M13 18.500h3" stroke="#f09122" stroke-width="3"/></svg></div>
    <div class="slot d-flex align-items-center justify-content-center"><svg width="23" height="30" viewBox="0 0 23 30"><rect width="23" height="30" rx="1.500" fill="#7b838a"/><rect x="3" y="3" width="17" height="5" fill="#4cdcf5"/><path d="M3 10h5v5H3zM9 10h5v5H9zM15 10h5v5h-5zM3 16h5v5H3zM9 16h5v5H9zM3 22h5v5H3zM9 22h5v5H9z" fill="#e1e4e7"/><rect x="15" y="16" width="5" height="11" fill="#123f7c"/></svg></div>
    <div class="slot d-flex align-items-center justify-content-center"><svg width="29" height="29" viewBox="0 0 29 29"><circle cx="14.500" cy="14.500" r="13" fill="#1d2330" stroke="#3ecfae" stroke-width="2"/><path d="M8 8q6 0 7-2 3 2 7 2.500Q22 19 14 23 8 19 8 13" fill="none" stroke="#3ecfae" stroke-width="2"/><path d="M16 8l-5 8h4l-2 6 6-9h-4z" fill="#3ecfae"/></svg></div>
    <div class="slot d-flex align-items-center justify-content-center"><svg width="30" height="23" viewBox="0 0 30 23"><rect width="30" height="23" rx="1" fill="#b9c4cc"/><rect x="1.500" y="1.500" width="27" height="20" fill="#eef4f8"/><path d="M1.500 21.500V16l3-1 2-10 3 11 4-1 2 2 2-11 3 11 2-5 2 4 4 1v5z" fill="#9dd7f5" stroke="#2b8dcc"/></svg></div>
    <div class="slot d-flex align-items-center justify-content-center"><svg width="28" height="23" viewBox="0 0 28 23"><rect width="28" height="23" rx="1" fill="#5b5f66"/><rect width="28" height="4" fill="#2f8fe0"/><rect x="1" y="4.500" width="26" height="17.500" fill="#000"/><text x="1.500" y="13" font-size="8" font-family="DejaVu Sans Mono" letter-spacing="-.6" fill="#fff">MySQL&gt;</text></svg></div>
    <div class="slot d-flex align-items-center justify-content-center"><svg width="27" height="27" viewBox="0 0 27 27"><path d="M0 27l2-7A13.200 13.200 0 1 1 7 25z" fill="#fff"/><path d="M2.800 24.300 4.200 19A11 11 0 1 1 8 23z" fill="#25c152"/><path d="M9 7.500q-3 2-.500 6 3 5 7.500 6 3.500 0 4-3l-3.500-2-1.500 1.800q-3-1-4.500-4L12 11l-1.200-3.500z" fill="#fff"/></svg></div>
    <div class="slot d-flex align-items-center justify-content-center"><svg width="28" height="23" viewBox="0 0 28 23"><rect width="28" height="23" rx="1" fill="#8e9398"/><rect x="1" y="3.500" width="26" height="18.500" fill="#050505"/><rect y="0" width="28" height="3" fill="#c9ced2"/><path d="M4 8h3M8 7l2 3M11 9h5" stroke="#ddd" stroke-width="1"/></svg></div>
    <div class="slot d-flex align-items-center justify-content-center"><svg width="30" height="30" viewBox="0 0 30 30"><path d="M15 0l7 7.500-7 7-7-7z" fill="#f4766f"/><path d="M0 15l7.500-7 7 7-7 7z" fill="#86b0f7"/><path d="M30 15l-7.500-7-7 7 7 7z" fill="#82c65a"/><path d="M15 30l7-7.500-7-7-7 7z" fill="#fbdd74"/><path d="M15 8v15M9.500 9l11 9" stroke="#2b2420" stroke-width="2"/><circle cx="15" cy="23" r="2.300" fill="#2b2420"/><circle cx="20" cy="17" r="2.300" fill="#2b2420"/></svg></div>
    <div class="slot d-flex align-items-center justify-content-center"><svg width="30" height="30" viewBox="0 0 30 30"><rect width="30" height="30" fill="#e95420"/><circle cx="15" cy="15" r="7.500" fill="none" stroke="#fff" stroke-width="3" stroke-dasharray="11.700 4" stroke-dashoffset="-2"/><circle cx="6.500" cy="15" r="2.700" fill="#fff"/><circle cx="19.500" cy="7.500" r="2.700" fill="#fff"/><circle cx="19.500" cy="22.500" r="2.700" fill="#fff"/></svg></div>
    <div class="slot d-flex align-items-center justify-content-center"><svg width="26" height="30" viewBox="0 0 26 30"><ellipse cx="13" cy="15" rx="13" ry="14.500" fill="#17212a"/><path d="M7 7Q1 13 4 19q3 5 7 6M19 7q6 6 3 12-3 5-7 6M8.500 17v5M17.500 17v5" fill="none" stroke="#168272" stroke-width="1.600"/><path d="M13 5q5 1 5 6 0 3-3 5v10h-4V16q-3-2-3-5 0-5 5-6z" fill="#168272"/></svg></div>
    <div class="slot d-flex align-items-center justify-content-center"><svg width="30" height="30" viewBox="0 0 30 30"><path d="M22 0l8 3.500v23L22 30z" fill="#2ba7ee"/><path d="M0 10l3-2.500L22 22v8z" fill="#0b72bd"/><path d="M22 0v8L3 22.500 0 20z" fill="#1688d4"/></svg><span class="dash" style="width:8px;background:#9ba0a6"></span></div>
  </div>
  <svg style="margin-left:23px" width="16" height="10" viewBox="0 0 16 10"><path d="M.500 9.500 8 1.500l7.500 8" class="ln" stroke-width="1.400"/></svg>
  <svg style="margin-left:12px" width="20" height="22" viewBox="0 0 20 22"><path d="M5 14a4 4 0 0 1-1-7.500Q5 2 9 2t5.500 4Q18 7 18 10v4z" fill="#b2b5b9"/><circle cx="14.500" cy="15.500" r="5.800" fill="#fde00a"/><path d="M14.500 12v4.500M14.500 18v1.500" stroke="#222" stroke-width="1.500"/></svg>
  <svg style="margin-left:15px" width="19" height="16" viewBox="0 0 19 16"><path d="M.800 6a12 12 0 0 1 17.400 0" class="ln opacity-50" stroke-width="1.600"/><path d="M3.300 8.800a8.500 8.500 0 0 1 12.400 0M6 11.400a5 5 0 0 1 7 0" class="ln" stroke-width="1.600"/><circle cx="9.500" cy="14" r="1.700" fill="#fff"/></svg>
  <svg style="margin-left:10px" width="20" height="16" viewBox="0 0 20 16"><path d="M.700 5.500h3L8 1.500v13L3.700 10.500h-3zM10.500 5q2 3 0 6M13 3q3.500 5 0 10" class="ln" stroke-width="1.300"/><path d="M15.500 1q5 7 0 14" class="ln opacity-50" stroke-width="1.300"/></svg>
  <svg style="margin-left:10px" width="20" height="18" viewBox="0 0 20 18"><rect x="3" y="6" width="14" height="10" rx="2.500" class="ln" stroke-width="1.500"/><rect x="5" y="8" width="10" height="6" fill="#fff"/><path d="M18.800 9v4" stroke="#fff" stroke-width="1.600"/><path d="M4 0 0 7h3l-1 5 5-7H4.500L6 0z" fill="#fff"/></svg>
  <div class="text-end ms-auto" style="font-size:13.900px;margin-top:-3px"><div>10:02 AM</div><div>2/10/2023</div></div>
  <span class="cnt own" style="margin:0 24px 0 10px">3</span>
</footer>
<script src="https://cdn.jsdelivr.net/npm/bootstrap@5.3.0/dist/js/bootstrap.bundle.min.js"></script>
</body>
</html>
